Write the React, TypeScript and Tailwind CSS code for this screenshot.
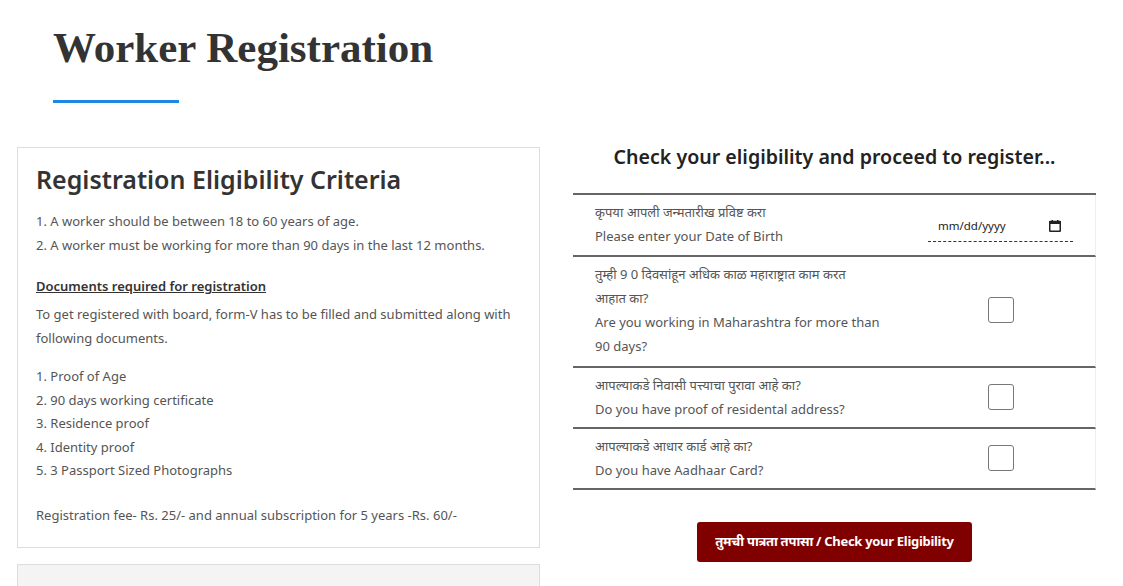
import React from 'react';

const sans = "font-['Noto_Sans','Open_Sans',sans-serif]";

const questions = [
  {
    mr: ['तुम्ही 9 0 दिवसांहून अधिक काळ महाराष्ट्रात काम करत', 'आहात का?'],
    en: 'Are you working in Maharashtra for more than 90 days?',
  },
  {
    mr: ['आपल्याकडे निवासी पत्त्याचा पुरावा आहे का?'],
    en: 'Do you have proof of residental address?',
  },
  {
    mr: ['आपल्याकडे आधार कार्ड आहे का?'],
    en: 'Do you have Aadhaar Card?',
  },
];

const documents = [
  '1. Proof of Age',
  '2. 90 days working certificate',
  '3. Residence proof',
  '4. Identity proof',
  '5. 3 Passport Sized Photographs',
];

const App: React.FC = () => {
  return (
    <div className={`min-h-screen bg-white ${sans} text-[#555]`}>
      {/* Page title */}
      <div className="pl-[53px] pt-[22px]">
        <h1 className="font-['Liberation_Serif','DejaVu_Serif',serif] font-bold text-[43px] leading-[52px] text-[#333]">
          Worker Registration
        </h1>
        <div className="mt-[26px] h-[3px] w-[126px] bg-[#1e88e5]" />
      </div>

      <div className="flex gap-[33px] pl-[17px] pt-[44px]">
        {/* Left: criteria */}
        <div className="w-[523px] shrink-0">
          <div className="border border-[#ddd] px-[18px] pt-[13px] pb-[20px] text-[13px] leading-[24px]">
            <h2 className="text-[25px] leading-[36px] font-semibold text-[#333] mb-[12px]">
              Registration Eligibility Criteria
            </h2>
            <p>1. A worker should be between 18 to 60 years of age.</p>
            <p>2. A worker must be working for more than 90 days in the last 12 months.</p>
            <p className="mt-[17px] font-semibold underline text-[#333]">Documents required for registration</p>
            <p className="mt-[4px]">
              To get registered with board, form-V has to be filled and submitted along with following documents.
            </p>
            <div className="mt-[15px] leading-[23.5px]">
              {documents.map((d) => (
                <p key={d}>{d}</p>
              ))}
            </div>
            <p className="mt-[20px]">Registration fee- Rs. 25/- and annual subscription for 5 years -Rs. 60/-</p>
          </div>
          <div className="mt-[16px] h-[40px] border border-[#ddd] bg-[#f4f4f4]" />
        </div>

        {/* Right: eligibility form */}
        <div className="w-[523px] shrink-0">
          <h2 className="text-center text-[19.6px] leading-[28px] font-semibold text-[#222] mt-[-4px] mb-[22px]">
            Check your eligibility and proceed to register...
          </h2>
          <div className="border-t-2 border-[#666]">
            <div className="flex items-center justify-between border-b-2 border-r border-b-[#666] border-r-[#eee] pl-[22px] pr-[22px] pt-[5px] pb-[7px] text-[13px] leading-[24px]">
              <div>
                <p>कृपया आपली जन्मतारीख प्रविष्ट करा</p>
                <p>Please enter your Date of Birth</p>
              </div>
              <div className="mt-[7px] flex w-[145px] items-center justify-between border-b border-dashed border-[#333] pl-[10px] pr-[12px] pb-[3px] text-[11.5px] text-[#222]">
                <span>mm/dd/yyyy</span>
                <svg width="12" height="12" viewBox="0 0 12 12">
                  <rect x="0.75" y="1.5" width="10.5" height="9.75" fill="none" stroke="#222" strokeWidth="1.5" rx="0.5" />
                  <rect x="0" y="1" width="12" height="3" fill="#222" />
                  <rect x="2.5" y="0" width="1.5" height="2" fill="#222" />
                  <rect x="8" y="0" width="1.5" height="2" fill="#222" />
                </svg>
              </div>
            </div>
            {questions.map((q, i) => (
              <div
                key={q.en}
                className={`flex items-center justify-between border-b-2 border-r border-b-[#666] border-r-[#eee] pl-[22px] pr-[81px] pt-[5px] text-[13px] leading-[24px] ${i === 0 ? 'pb-[8px]' : 'pb-[6px]'}`}
              >
                <div className="w-[300px]">
                  {q.mr.map((l) => (
                    <p key={l}>{l}</p>
                  ))}
                  <p>{q.en}</p>
                </div>
                <div className="h-[26px] w-[26px] rounded-[3px] border border-[#777] bg-white" />
              </div>
            ))}
          </div>
          <div className="flex justify-center pt-[32px]">
            <button className="h-[40px] w-[275px] rounded-[3px] bg-[#800000] text-[13px] font-bold tracking-[-0.3px] text-white">
              तुमची पात्रता तपासा / Check your Eligibility
            </button>
          </div>
        </div>
      </div>
    </div>
  );
};

export default App;
